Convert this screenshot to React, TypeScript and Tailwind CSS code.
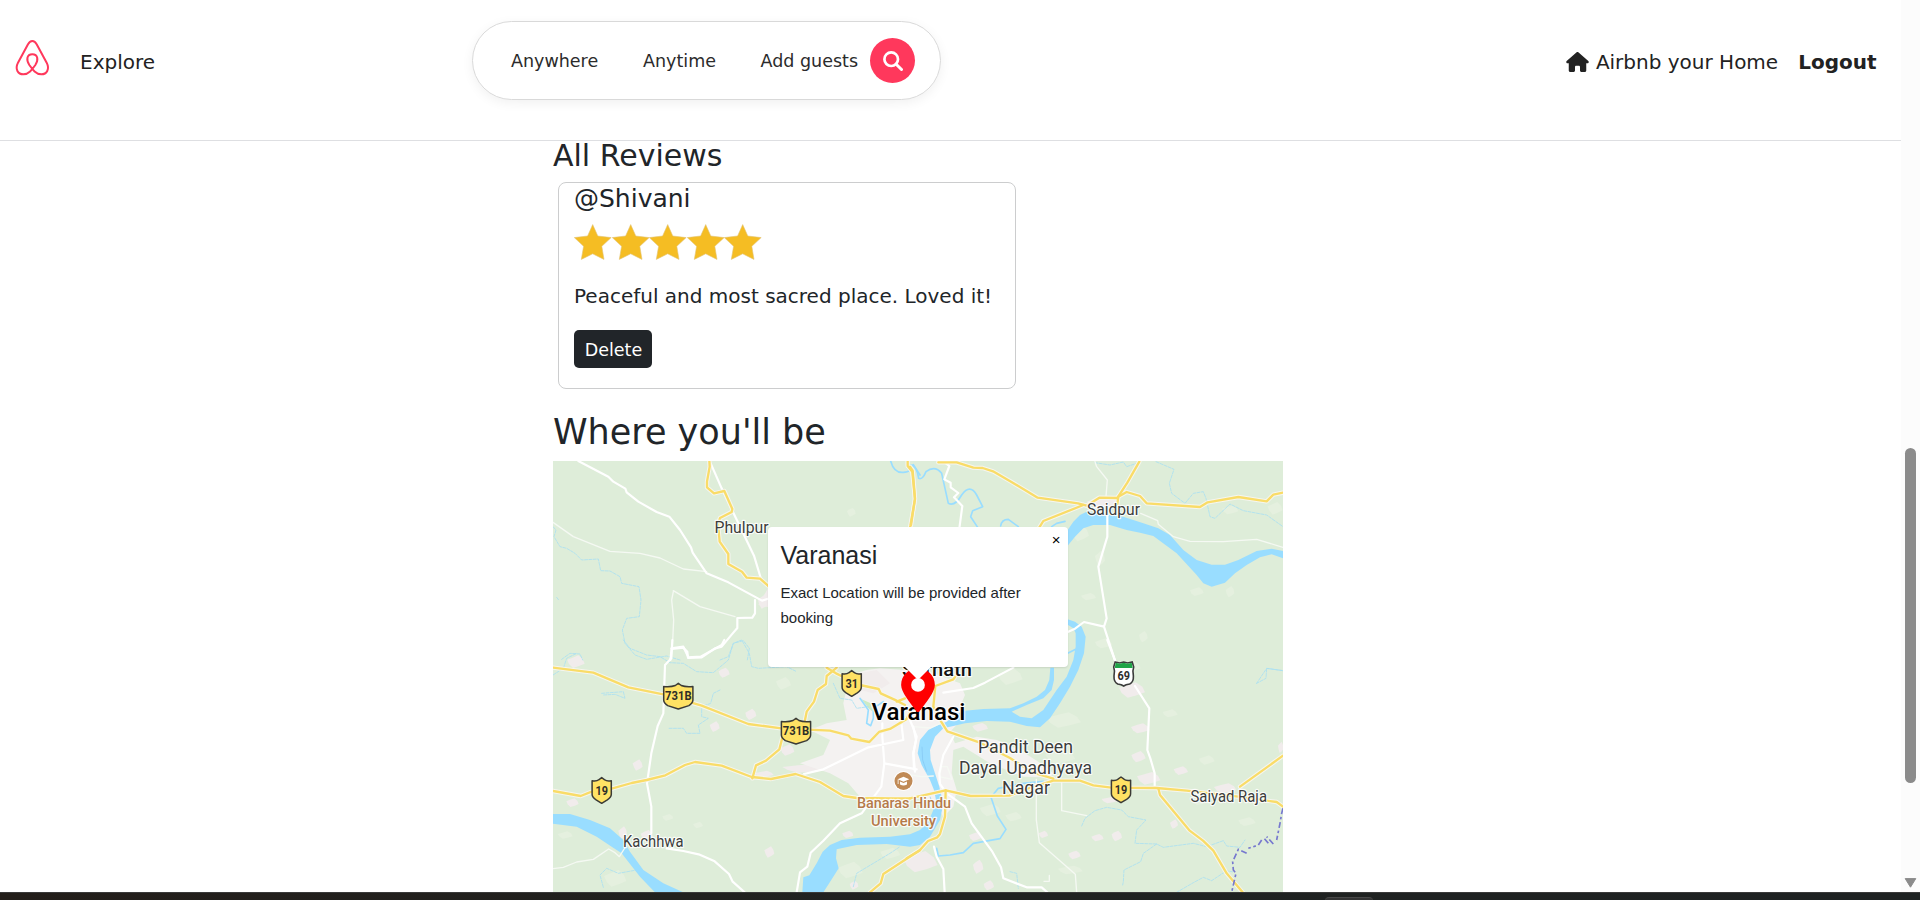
import React from "react";
import { FaHouse } from "react-icons/fa6";

const yellowRoads: Record<string, string[]> = {
  nw: [
    "M508 183L509 200L501 245L501 262L522 280L553 273L577 327L575 336L540 354L534 372L539 425L565 462L565 492L606 515L620 533L660 536L684 557L700 575",
    "M1103 183L1103 198L1117 215L1125 298L1111 378L1105 400",
  ],
  ne: [
    "M0 50L8 62L15 145L3 225",
    "M85 37L140 37L190 53L218 54L249 64L303 95L383 143L504 160L530 167L568 143L622 144L652 98L688 35",
    "M622 163L625 140L650 126L690 138L710 160L870 171L893 157L985 141L1070 154L1090 134L1119 128",
    "M520 165L400 213L388 232",
  ],
  sw: [
    "M39 83L160 98L265 142L370 163L485 197L625 252L724 265L870 272L925 286L934 296L988 306L1017 276L1050 267L1100 237L1110 215",
    "M860 83L888 100L960 135L1016 147L1022 160L1070 182L1095 195M890 83L860 108L858 132L833 150L822 185L800 215L795 240M728 290L718 328L678 362L648 376L637 415M1095 175L1070 185",
    "M39 453L122 468L155 455L215 446L275 429L320 420L376 406L435 375L465 366L545 377L635 411L693 417L767 402L840 426L910 468L950 474L1060 475L1110 475",
    "M1140 630L1030 702L1022 730L990 757",
  ],
  se: [
    "M0 475L107 451L182 468L298 467L340 450L430 422L510 422L550 436L604 443L740 444L830 452L985 470L1100 486L1119 500M990 440L1119 347",
    "M142 100L130 118L76 138L70 200L95 247L112 274L210 308L300 354L370 398L430 416",
    "M107 451L105 530L90 582L82 592L54 603L28 632L-10 655",
    "M745 445L750 465L838 571L879 602L910 632L950 700L998 757",
  ],
};

const whiteRoads: Record<string, string[]> = {
  nw: [
    "M115 183L205 230L220 245L256 266L260 277L295 305L350 336L388 350L420 390L453 442L458 458L500 520L565 547L666 602L684 596",
    "M512 190L545 265L580 338L642 467L664 540",
    "M645 600L645 640L637 653L592 654L592 684L573 706L545 740L525 745L485 772L444 774L442 755L430 743L395 747L391 780",
  ],
  ne: [
    "M592 195L592 260L565 350L590 505L582 530L615 632M582 530L522 516L495 536L473 546",
    "M108 40L118 48L103 88L122 98L122 112L145 129L132 142L157 168L148 235",
  ],
  sw: [
    "M397 0L394 55L375 75L370 220L353 258L334 340L321 430L334 500L334 580M394 25L430 20L445 52L482 50L545 15L553 0M380 625L430 633L476 643L524 664L567 702L578 725L614 757",
    "M792 402L850 388L985 322L1090 300L1083 240M1027 250L1027 290L1033 370L1130 388M1033 370L1024 440L965 520L900 550L850 602L812 638L802 680L780 697L770 757M1110 240L1130 290L1120 340L1125 395",
  ],
  se: [
    "M100 158L190 144L225 128L310 83M592 0L617 66M675 138L718 205L712 330L721 355L734 400L734 440",
    "M10 260L18 300L10 340L12 388M130 290L100 345L88 400L90 432L110 460L165 500L185 550L247 635L273 682L280 715L350 742L395 742L412 757M72 620L80 650L100 687L104 757",
  ],
};

const minorRoads: Record<string, string[]> = {
  nw: [
    "M39 367L100 410L210 454L300 460L360 474L430 507L500 515M400 572L480 620L585 650M400 575L395 600L401 660L397 745",
  ],
  ne: [
    "M555 35L560 50L592 90L588 140M692 190L743 212L745 223L790 260L840 274L940 275L1040 268L1119 292",
  ],
  sw: ["M39 686L70 682L110 666L160 658L206 627L225 638L238 650L260 615"],
  se: [
    "M379 418L379 540L388 608L496 703L500 757M455 428L455 512L530 527M10 260L60 264L92 250M-20 402L35 410L70 408M112 380L126 418L88 410L95 380L112 380M418 706L418 724L402 724",
  ],
};

const streams: Record<string, string[]> = {
  nw: [
    "M39 380L48 390L42 410L60 440L80 445L105 460L125 480L175 477L182 512L210 513L240 530L245 550L297 560L303 600L298 650L260 655L247 690L255 730L285 765L320 778L380 768L420 780M50 592L56 600M65 778L90 760L120 762L128 780M540 780L565 770L580 730L610 722L628 745L622 780",
  ],
  ne: [
    "M555 38L600 45L640 36L650 50L680 40M738 35L792 58L778 100L785 130L825 160L850 130L880 125L888 145L900 200L915 205L960 162L1000 182L1070 195L1119 230M1119 662L1070 655L1068 685L1040 700",
  ],
  sw: [
    "M250 0L270 25L320 45L360 50L390 68L430 70L470 95L520 98L565 60L580 10L605 0L628 40L635 80L655 85L740 80L770 95M39 105L70 85L80 55L110 40M185 160L250 155L255 175L225 163L190 165M540 150L520 160L512 190L485 200L485 230L505 235L475 255L480 280L440 280L430 265L385 265M880 130L900 175L935 180L950 205L985 200M190 742L180 705L200 685L235 700L290 690L310 700M940 740L950 700L1050 640L1080 620",
  ],
  se: [
    "M515 558L525 535L555 512L590 502L635 510L655 530L708 540L680 570L675 610L740 612L760 622L850 610L890 620L940 602L950 618L990 622L1005 600M740 612L700 640L692 665L642 690L640 725L638 735M800 757L850 728L880 712L905 722L950 692L970 696M300 695L320 700L325 745M1040 130L1070 85L1119 92",
  ],
};

const brooks: Record<string, string[]> = {
  nw: ["M1052 183Q1062 220 1090 217T1103 205L1120 194L1140 225"],
  ne: [
    "M0 45Q20 45 26 85Q38 90 48 65Q75 45 95 70L115 160Q135 170 155 135Q180 100 200 135L218 170L188 182L182 200L205 235M272 228Q275 208 295 208L325 230M425 230L440 220L465 214M473 610L497 598",
  ],
  sw: ["M960 175L985 210L980 250L992 257L1000 235L1000 205L1030 185"],
  se: [
    "M265 445L243 472L262 528L288 568L270 596L190 610L160 638L120 645L85 648L80 625M265 445L340 430L400 424",
  ],
};

const blobs: [number, number, number, number][] = [
  [30, 665, 55, 34], [562, 593, 20, 12], [620, 588, 17, 17], [493, 645, 20, 14], [204, 680, 17, 22],
  [236, 736, 17, 16], [400, 583, 15, 12], [195, 590, 20, 14], [792, 552, 13, 15], [685, 350, 23, 18],
  [812, 392, 23, 14], [715, 415, 38, 20], [945, 445, 36, 16], [690, 265, 30, 16], [665, 150, 42, 24],
  [1112, 322, 9, 18], [210, 262, 25, 14], [600, 480, 28, 10],
  [-1003, 65, 28, 20], [-558, 98, 18, 16], [-478, 223, 18, 18], [-586, 260, 16, 17], [-817, 375, 16, 18],
  [-1013, 488, 20, 14], [-422, 636, 16, 18], [-168, 736, 14, 14], [-187, 583, 18, 12], [-368, 330, 22, 18],
  [-310, 385, 80, 14], [-438, 402, 30, 10], [-862, 578, 14, 20], [-790, 585, 20, 16],
  [-440, -115, 18, 22],
];

const fields: [number, number, number, number][] = [
  [300, 110, 40, 26], [460, 240, 55, 24], [450, 350, 48, 22], [660, 80, 34, 18], [780, 220, 24, 13],
  [1010, 545, 28, 14], [870, 480, 30, 16], [890, 360, 25, 15], [480, 690, 40, 14], [240, 510, 34, 20],
  [310, 530, 26, 15], [700, -10, 14, 18], [860, -145, 22, 14], [960, -145, 14, 18], [535, -130, 24, 12],
  [960, -390, 26, 14], [1095, -395, 24, 20], [570, -245, 16, 25], [510, -320, 28, 25],
  [-727, 532, 18, 10], [-636, 555, 16, 10], [-885, 715, 36, 26], [-180, 690, 40, 26], [-60, 640, 32, 18],
  [-1035, 585, 24, 12], [-176, -383, 14, 14], [-380, 130, 24, 20], [580, 10, 28, 16],
];

const origins: Record<string, string> = {
  nw: "translate(-1110 -720)",
  ne: "translate(0 -570)",
  sw: "translate(-1110 0)",
  se: "translate(0 0)",
};

function Lines({ data, color, width, dash }: { data: Record<string, string[]>; color: string; width: number; dash?: string }) {
  return (
    <g fill="none" stroke={color} strokeWidth={width} strokeLinejoin="round" strokeLinecap="round" strokeDasharray={dash}>
      {Object.entries(data).map(([k, paths]) => (
        <g key={k} transform={origins[k]}>
          {paths.map((d, i) => (
            <path key={i} d={d} />
          ))}
        </g>
      ))}
    </g>
  );
}

function patch(cx: number, cy: number, rx: number, ry: number) {
  const k = [1, 0.75, 1, 0.8, 0.95, 0.7, 1, 0.85];
  return k
    .map((r, i) => {
      const a = (i * Math.PI) / 4 + 0.3;
      return `${(cx + Math.cos(a) * rx * r).toFixed(0)},${(cy + Math.sin(a) * ry * r).toFixed(0)}`;
    })
    .join(" ");
}

function Shield({ x, y, label, wide }: { x: number; y: number; label: string; wide?: boolean }) {
  const w = wide ? 14.6 : 9.6;
  return (
    <g transform={`translate(${x} ${y})`}>
      <path
        d={`M${-w} -9.5 Q${-w / 2} -8.8 -3 -10.5 L0 -12.7 L3 -10.5 Q${w / 2} -8.8 ${w} -9.5 V4 Q${w} 7 ${w - 4} 9.6 L0 13 L${4 - w} 9.6 Q${-w} 7 ${-w} 4Z`}
        fill="#ffe264"
        stroke="#3b3b36"
        strokeWidth="1.5"
        strokeLinejoin="round"
      />
      <text
        x="0"
        y="4.4"
        textAnchor="middle"
        fontSize="12.5"
        fontWeight="700"
        fill="#2e2e28"
        textLength={wide ? 26.5 : 12.5}
        lengthAdjust="spacingAndGlyphs"
      >
        {label}
      </text>
    </g>
  );
}

function Place({ x, y, size, w, color = "#3c3c3c", weight = 400, children }: { x: number; y: number; size: number; w: number; color?: string; weight?: number; children: string }) {
  return (
    <text
      x={x}
      y={y}
      fontSize={size}
      fontWeight={weight}
      fill={color}
      stroke="#fff"
      strokeOpacity="0.85"
      strokeWidth="2.4"
      strokeLinejoin="round"
      paintOrder="stroke"
      textLength={w}
      lengthAdjust="spacingAndGlyphs"
    >
      {children}
    </text>
  );
}

function MapDrawing() {
  return (
    <svg className="block h-full w-full" viewBox="553 461 730 431" fontFamily="Roboto, sans-serif">
      <rect x="553" y="461" width="730" height="431" fill="#deedd9" />
      <g transform="translate(910 640) scale(0.33333)">
        <g fill="#e5f0df">
          {fields.map((f, i) => (
            <polygon key={i} points={patch(...f)} />
          ))}
        </g>
        <g fill="#f1ecec">
          {blobs.map((b, i) => (
            <polygon key={i} points={patch(...b)} />
          ))}
        </g>
        <path
          d="M-180 105L-130 90L-90 85L60 95L150 130L165 165L150 200L160 235L120 275L135 310L200 290L260 300L330 330L400 375L430 400L420 412L340 410L240 370L160 320L130 330L125 400L140 450L130 500L100 530L70 480L20 470L-60 480L-150 470L-185 430L-240 400L-330 370L-260 345L-240 300L-300 270L-250 250L-190 240L-200 190Z"
          fill="#f4f2f1"
        />
        <path d="M-180 105L-100 90L-60 130L-110 160L-150 150Z" fill="#f1ecec" />
        <path d="M-145 178L-118 190L-112 215L-126 203Z" fill="#cdebc4" />
        <path d="M-455 -105L-426 -155L-424 -98Z" fill="#f1ecec" />
        <path d="M530 -415L570 -430L622 -428L624 -400L560 -395Z" fill="#f1ecec" />
        <Lines data={streams} color="#a9e0f2" width={2.5} dash="9 4" />
        <Lines data={brooks} color="#99ddff" width={5} />
        <path
          d="M473 -62L495 -55L515 -40L527 -10L525 10L522 40L505 90L480 140L450 190L420 235L390 262L350 258L300 245L230 243L165 250L130 258L100 265L75 290L60 330L62 360L75 400L88 440L95 470L98 500L90 540L60 590L30 615L0 620L-70 612L-160 615L-220 628L-222 655L-214 685L-230 710L-260 757L-323 757L-320 712L-302 706L-280 670L-262 635L-240 615L-205 600L-150 593L-60 590L0 583L30 570L55 545L70 510L78 480L72 450L60 420L35 375L23 340L30 300L55 270L85 255L110 245L140 222L165 212L220 207L300 205L340 190L380 170L405 150L418 120L421 83L432 83L432 120L425 150L400 175L350 195L305 215L330 230L365 235L400 210L440 150L470 110L490 60L497 20L497 -20L490 -35L473 -46Z"
          fill="#99ddff"
        />
        <g transform={origins.ne}>
          <path
            d="M473 240L490 215L510 195L530 185L570 190L640 200L700 220L745 235L780 255L820 300L860 330L905 344L945 344L985 330L1040 303L1085 296L1119 303V325L1085 313L1050 322L1010 345L975 370L945 398L905 410L880 400L860 375L800 310L730 258L690 248L650 240L600 225L550 225L520 235L495 260L473 287Z"
            fill="#99ddff"
          />
        </g>
        <g transform={origins.sw}>
          <path
            d="M39 522H90L150 540L210 565L250 600L270 635L310 690L370 730L430 757H345L300 710L245 640L215 620L170 590L110 560L39 551Z"
            fill="#99ddff"
          />
        </g>
        <path d="M36 320L38 360L50 395M60 470L72 500" stroke="#83c6f2" strokeWidth="2" fill="none" />
        <Lines data={minorRoads} color="#f5f9f3" width={4} />
        <Lines data={whiteRoads} color="#ffffff" width={6.5} />
        <Lines data={yellowRoads} color="#f6f6ef" width={13} />
        <Lines data={yellowRoads} color="#f9dc68" width={7} />
        <path
          d="M1119 505L1115 520L1110 550L1100 600M1090 612L1070 590M1075 610L1060 592M1055 600L1045 615L1015 625M1010 640L985 628L968 665L970 690L978 700L965 757"
          fill="none"
          stroke="#7678cf"
          strokeWidth="5"
          strokeDasharray="18 8 8 8"
        />
      </g>

      <Place x={714.5} y={532.5} size={16} w={54}>Phulpur</Place>
      <Place x={1087} y={514.5} size={16} w={53}>Saidpur</Place>
      <Place x={623} y={846.5} size={16} w={60.5}>Kachhwa</Place>
      <Place x={1190.5} y={801.5} size={16} w={76.5}>Saiyad Raja</Place>
      <Place x={978} y={753} size={18.5} w={95}>Pandit Deen</Place>
      <Place x={959} y={774} size={18.5} w={133}>Dayal Upadhyaya</Place>
      <Place x={1002} y={794} size={18.5} w={48}>Nagar</Place>
      <Place x={857} y={807.5} size={15.5} w={94} color="#b57a49" weight={500}>Banaras Hindu</Place>
      <Place x={871} y={825.5} size={15.5} w={65} color="#b57a49" weight={500}>University</Place>
      <Place x={902} y={676} size={18.5} w={70} color="#111" weight={500}>Sarnath</Place>
      <Place x={871.5} y={720.3} size={24} w={94} color="#000" weight={500}>Varanasi</Place>

      <g transform="translate(903.5 781)">
        <circle r="10" fill="#fff" />
        <circle r="9" fill="#c08a56" />
        <path d="M-5.8 -1.8L0 -4.3L5.8 -1.8L0 .7ZM-3.5 .4V3.4Q0 5.6 3.5 3.4V.4L0 2ZM-5.8 -1.4V3H-5V-1Z" fill="#fff" />
      </g>

      <Shield x={678.3} y={696} label="731B" wide />
      <Shield x={796} y={731} label="731B" wide />
      <Shield x={851.7} y={683.3} label="31" />
      <Shield x={601.7} y={790.3} label="19" />
      <Shield x={1121} y={789.7} label="19" />
      <g transform="translate(1123.7 674)">
        <path
          d="M-8.5 -12L-4 -11L0 -12L4 -11L8.5 -12L10 -7Q8.5 -3 9.7 2Q10 8 6 10Q2 10.6 0 12Q-2 10.6 -6 10Q-10 8 -9.7 2Q-8.5 -3 -10 -7Z"
          fill="#fff"
          stroke="#3b3b3b"
          strokeWidth="1.6"
        />
        <path d="M-8 -11.2L-4 -10.3L0 -11.3L4 -10.3L8 -11.2L9 -6H-9Z" fill="#1fa447" />
        <text x="0" y="5.7" textAnchor="middle" fontSize="12.5" fontWeight="700" fill="#2e2e2e" textLength="12.5" lengthAdjust="spacingAndGlyphs">
          69
        </text>
      </g>
    </svg>
  );
}

function Popup() {
  return (
    <>
      <svg className="absolute left-[347.8px] top-[206.7px]" width="34" height="45" viewBox="0 0 27 36">
        <path
          fill="#ff0000"
          d="M27 13.5C27 19.07 20.25 27 14.75 34.5C14.02 35.5 12.98 35.5 12.25 34.5C6.75 27 0 19.22 0 13.5C0 6.04 6.04 0 13.5 0C20.96 0 27 6.04 27 13.5Z"
        />
        <circle fill="#fff" cx="13.5" cy="13.5" r="5.5" />
      </svg>
      <div className="absolute left-[215px] top-[66px] h-[140px] w-[300px] rounded-[4px] bg-white px-[12.5px] pt-[13px] font-['Liberation_Sans',Arial,sans-serif] text-[#212529] shadow-[0_1px_2px_rgba(0,0,0,0.1)]">
        <h5 className="mb-[10px] text-[25px] leading-[30px]">Varanasi</h5>
        <p className="text-[15px] leading-[25px]">Exact Location will be provided after booking</p>
        <span className="absolute right-[7.5px] top-[0px] text-[15px] leading-[25px] text-black">×</span>
      </div>
      <svg className="absolute left-[352px] top-[206px]" width="26" height="13" viewBox="0 0 26 13">
        <path d="M0 0H26L13 13Z" fill="#fff" />
      </svg>
    </>
  );
}

function Star() {
  return (
    <svg width="37.5" height="36" viewBox="0 0 37.5 36">
      <path
        d="M18.7 .6L23.8 12L37.2 13.6L27.8 22.3L30 35.4L18.7 29.8L7.3 35.4L9.6 22.3L.3 13.6L13.6 12Z"
        fill="#f5bd23"
        stroke="#e3c577"
        strokeWidth="0.6"
      />
    </svg>
  );
}

function Logo() {
  return (
    <svg className="mb-[7px]" width="49" height="50" viewBox="0 0 147 150">
      <path
        d="M73 27C66 27 63 31 60 37L30 92C20 112 30 127 46 127C62 127 72 113 82 99C92 84 90 67 73 67C56 67 54 84 64 99C74 113 84 127 100 127C116 127 126 112 116 92L86 37C83 31 80 27 73 27Z"
        fill="none"
        stroke="#ff385c"
        strokeWidth="6"
      />
    </svg>
  );
}

function SearchIcon() {
  return (
    <svg className="ml-[1px]" width="20" height="20" viewBox="0 0 20 20" fill="none" stroke="#fff">
      <circle cx="8.2" cy="8.2" r="6.8" strokeWidth="2.7" />
      <path d="M13.2 13.2L18.5 18.5" strokeWidth="3" strokeLinecap="round" />
    </svg>
  );
}

export default function App() {
  return (
    <div className="flex h-[900px] w-[1920px] flex-col overflow-hidden bg-white font-['DejaVu_Sans',Verdana,sans-serif] text-[20px] text-[#212529]">
      <div className="flex h-[892px]">
        <div className="flex w-[1901px] flex-col overflow-hidden">
          <header className="flex h-[141px] shrink-0 items-start border-b border-[#dedfe2] text-[#222222]">
            <div className="flex h-[121px] w-[472px] items-center pl-[8px]">
              <Logo />
              <span className="pl-[23px] pt-[2px]">Explore</span>
            </div>
            <div className="mt-[21px] flex h-[79px] w-[469px] items-center rounded-full border border-[#d9d9d9] pl-[38px] text-[17.5px] text-[#2b2b2b] shadow-[0_3px_12px_rgba(0,0,0,0.06)]">
              <span className="w-[132px] pt-[2px]">Anywhere</span>
              <span className="w-[117.5px] pt-[2px]">Anytime</span>
              <span className="w-[109px] whitespace-nowrap pt-[2px]">Add guests</span>
              <span className="flex h-[45px] w-[45px] items-center justify-center rounded-full bg-[#ff385c]">
                <SearchIcon />
              </span>
            </div>
            <div className="ml-auto flex h-[121px] items-center pr-[24.5px]">
              <FaHouse className="mr-[7px] mt-[2px] h-[20px] w-[23px]" />
              <span className="pt-[2px]">Airbnb your Home</span>
              <span className="pl-[20px] pt-[2px] font-bold">Logout</span>
            </div>
          </header>

          <main className="ml-[553px] w-[730px]">
            <h4 className="-mt-[3px] text-[30px] leading-[36px]">All Reviews</h4>
            <section className="ml-[5px] mt-[8px] h-[207px] w-[458px] rounded-[8px] border border-[#cccdce] pl-[15px]">
              <h5 className="pt-[1px] text-[25px] leading-[30px]">@Shivani</h5>
              <div className="mt-[10px] flex h-[36px]">
                {[1, 2, 3, 4, 5].map((n) => (
                  <Star key={n} />
                ))}
              </div>
              <p className="mt-[21px] whitespace-nowrap leading-[30px]">Peaceful and most sacred place. Loved it!</p>
              <button className="mt-[19px] flex h-[38px] w-[78px] items-center justify-center rounded-[5px] bg-[#212529] pl-[1px] pt-[2px] text-[17.5px] text-white">
                Delete
              </button>
            </section>
            <h3 className="mt-[22px] text-[35px] leading-[42px]">Where you'll be</h3>
            <div className="relative mt-[8px] h-[431px] w-[730px] overflow-hidden">
              <MapDrawing />
              <Popup />
            </div>
          </main>
        </div>
        <div className="flex w-[19px] flex-col items-center bg-[#fcfcfc] pr-[1px]">
          <div className="mt-[448px] h-[335px] w-[11px] rounded-full bg-[#8b8b8b]" />
          <svg className="mt-[95px]" width="13" height="10" viewBox="0 0 13 10">
            <path d="M1.2 .6H11.8L6.5 9.2Z" fill="#8b8b8b" stroke="#8b8b8b" strokeLinejoin="round" />
          </svg>
        </div>
      </div>
      <footer className="h-[8px] border-t border-[#3a3a3a] bg-gradient-to-r from-[#231e1a] via-[#202221] to-[#1e2222]">
        <div className="ml-[1325px] mt-[4px] h-[4px] w-[48px] rounded-t-[4px] border-t border-[#484848] bg-[#333333]" />
      </footer>
    </div>
  );
}
